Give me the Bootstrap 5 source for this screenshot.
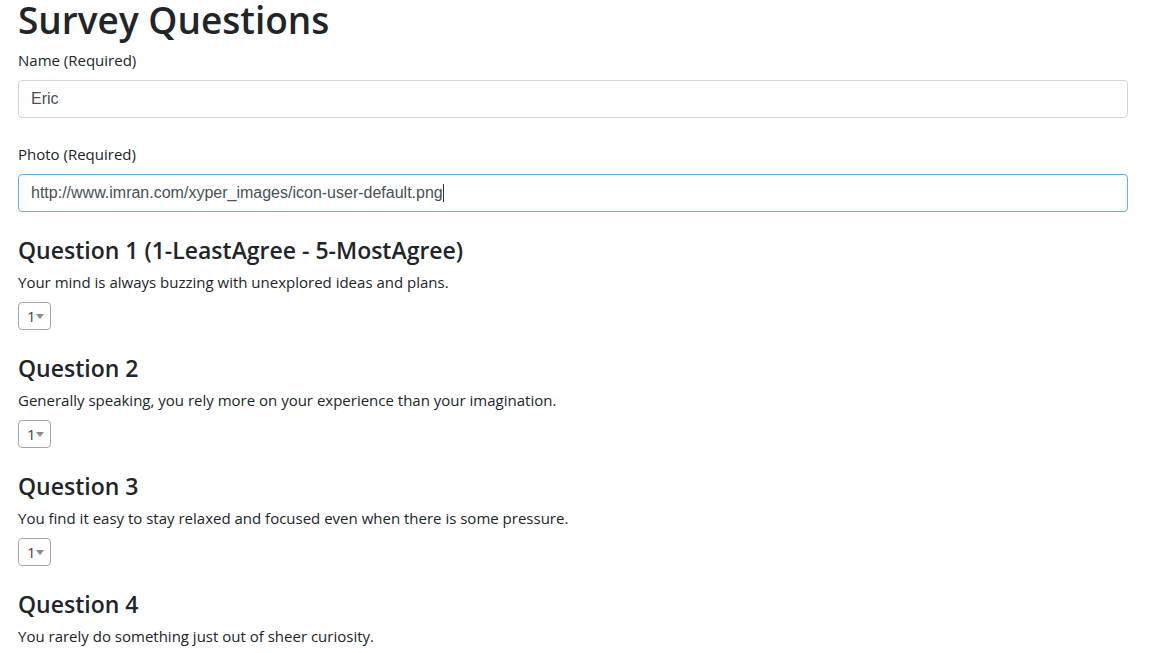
<!DOCTYPE html>
<html lang="en">
<head>
<meta charset="utf-8">
<meta name="viewport" content="width=device-width, initial-scale=1">
<title>Survey</title>
<link href="https://cdn.jsdelivr.net/npm/bootstrap@5.3.0/dist/css/bootstrap.min.css" rel="stylesheet">
<style>
body{font-family:"Open Sans","Noto Sans",sans-serif;color:#212529}
.survey{padding:0 21px 0 18px}
.survey h1{font-size:37px;line-height:40px;font-weight:600;margin-bottom:8px}
.survey h2{font-size:23px;line-height:28px;font-weight:600;margin-bottom:6px}
.survey label,.survey p{font-size:15px;line-height:24px;display:block}
.survey .form-control{font:16px/24px "Liberation Sans",Arial,sans-serif;color:#495057;border-color:#d5d5d5;border-radius:4px;padding:6px 12px}
.survey .form-control:focus{border-color:#5bb0f5;box-shadow:none}
/* text cursor at the end of the photo address */
#photo:focus{caret-color:transparent;background:linear-gradient(#333,#333) 424px center/1px 18px no-repeat}
.rating{appearance:none;display:block;width:33px;height:28px;border:1px solid #a5a5a5;border-radius:4px;padding:0 8px;font-size:15px;line-height:26px;color:#444;background:#fff url("data:image/svg+xml,%3Csvg xmlns='http://www.w3.org/2000/svg' width='8' height='5'%3E%3Cpath d='M0 0h8L4 5z' fill='%23888'/%3E%3C/svg%3E") no-repeat right 6px center}
</style>
</head>
<body>
<main class="survey container-fluid">
<h1>Survey Questions</h1>
<form>
<div class="mb-4"><label for="name" class="mb-2">Name (Required)</label><input class="form-control" id="name" type="text" value="Eric"></div>
<div class="mb-4"><label for="photo" class="mb-2">Photo (Required)</label><input class="form-control" id="photo" type="text" value="http://www.imran.com/xyper_images/icon-user-default.png" autofocus></div>
<section class="mb-4"><h2>Question 1 (1-LeastAgree - 5-MostAgree)</h2><label for="q1" class="mb-2">Your mind is always buzzing with unexplored ideas and plans.</label><select class="rating" id="q1"><option>1</option><option>2</option><option>3</option><option>4</option><option>5</option></select></section>
<section class="mb-4"><h2>Question 2</h2><label for="q2" class="mb-2">Generally speaking, you rely more on your experience than your imagination.</label><select class="rating" id="q2"><option>1</option><option>2</option><option>3</option><option>4</option><option>5</option></select></section>
<section class="mb-4"><h2>Question 3</h2><label for="q3" class="mb-2">You find it easy to stay relaxed and focused even when there is some pressure.</label><select class="rating" id="q3"><option>1</option><option>2</option><option>3</option><option>4</option><option>5</option></select></section>
<section><h2>Question 4</h2><p class="mb-0">You rarely do something just out of sheer curiosity.</p></section>
</form>
</main>
<script src="https://cdn.jsdelivr.net/npm/bootstrap@5.3.0/dist/js/bootstrap.bundle.min.js"></script>
</body>
</html>
